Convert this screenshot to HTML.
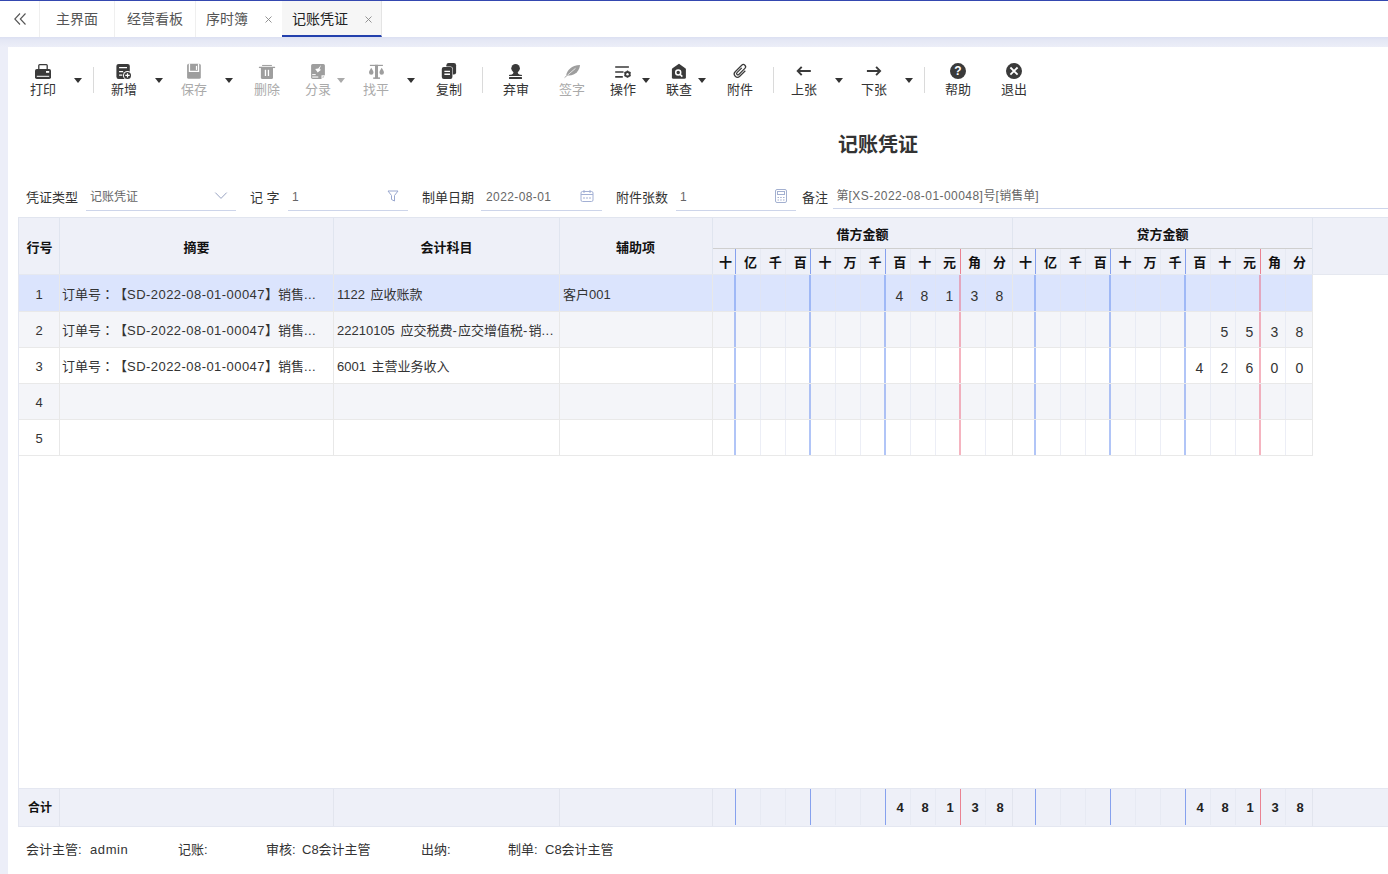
<!DOCTYPE html>
<html lang="zh-CN">
<head>
<meta charset="utf-8">
<title>记账凭证</title>
<style>
*{box-sizing:border-box;margin:0;padding:0}
html,body{width:1388px;height:874px;overflow:hidden}
body{background:#eceef8;text-spacing-trim:space-all;font-family:"Liberation Sans","Noto Sans CJK SC",sans-serif;font-size:14px;color:#333;position:relative}
.abs{position:absolute}
/* top tab bar */
#topline{left:0;top:0;width:1388px;height:1px;background:#3448b0}
#tabbar{left:0;top:0;width:1388px;height:37px;background:#fff}
#tabshadow{left:0;top:37px;width:1388px;height:10px;background:linear-gradient(#dce0f2,#e5e8f5 35%,#eceef8)}
.tab{position:absolute;top:1px;height:36px;line-height:37px;font-size:14px;color:#555;border-left:1px solid #efefef;white-space:nowrap}
.tab span{position:absolute;top:0}
.tab.act{background:#f6f6f6;color:#222;border-bottom:2px solid #2340ad;border-left:none;border-right:1px solid #e4e4e4}
.x{font-size:13px;color:#888}
/* panel */
#panel{left:8px;top:47px;width:1380px;height:827px;background:#fff}
/* toolbar */
.tb{position:absolute;top:62px;width:60px;height:38px;text-align:center;font-size:13px;color:#333}
.tb svg{position:absolute;left:50%;margin-left:-10px;top:0;width:20px;height:18px}
.tb b{position:absolute;left:0;right:0;top:19px;line-height:18px;font-weight:normal}
.tb.dis{color:#aaa}
.arr{position:absolute;width:0;height:0;border-left:4px solid transparent;border-right:4px solid transparent;border-top:5.5px solid #333;top:77.5px}
.arr.dis{border-top-color:#aaa}
.sep{position:absolute;top:67px;width:1px;height:26px;background:#dadada}
/* title */
#title{left:778px;top:130px;width:200px;text-align:center;font-size:20px;font-weight:bold;color:#333;line-height:30px}
/* form */
.lbl{position:absolute;top:188px;height:20px;line-height:20px;font-size:13px;color:#333;white-space:nowrap}
.inp{position:absolute;top:185px;height:26px;border-bottom:1px solid #cdd5ea;font-size:12px;color:#666;line-height:25px;padding-left:4px;white-space:nowrap}
/* table */
#thead{left:18px;top:217px;width:1370px;height:58px;background:#eef0f8;border-top:1px solid #e1e5ef;border-left:1px solid #e1e5ef;border-bottom:1px solid #e5e8f0}
.th{position:absolute;font-size:13px;font-weight:bold;color:#111;text-align:center;white-space:nowrap}
.vl{position:absolute;width:1px;background:rgba(225,228,241,.64)}
.hl{position:absolute;height:1px;background:#e9e9e9}
.row{position:absolute;left:19px;width:1293px;height:36px}
.cell{position:absolute;font-size:13px;color:#333;white-space:nowrap;line-height:36px;top:2px}
.l{letter-spacing:.45px}
.km{word-spacing:2px}
.hy{letter-spacing:1.2px}
.dg{position:absolute;width:25px;text-align:center;font-size:14px;color:#333;line-height:36px;top:3px}
#total{left:18px;top:788px;width:1370px;height:39px;background:#eef0f8;border-top:1px solid #e4e7f1;border-bottom:1px solid #e4e7f1;border-left:1px solid #e4e7f1}
.ft{position:absolute;top:840px;line-height:20px;font-size:13px;color:#333;white-space:nowrap}
.tc{font-family:"Liberation Sans","Noto Sans CJK TC",sans-serif}
</style>
</head>
<body>
<div id="tabbar" class="abs">
<svg class="abs" style="left:13px;top:12px" width="14" height="14" viewBox="0 0 14 14"><path d="M7 1.500 1.800 7l5.200 5.500M12.500 1.500 7.300 7l5.200 5.500" fill="none" stroke="#555" stroke-width="1.100"/></svg>
<div class="tab" style="left:39px;width:75px"><span style="left:16px">主界面</span></div>
<div class="tab" style="left:114px;width:81px"><span style="left:12px">经营看板</span></div>
<div class="tab" style="left:195px;width:87px"><span style="left:10px">序时簿</span><svg class="abs" style="left:69px;top:14.500px" width="7" height="7" viewBox="0 0 7 7"><path d="M.5.500l6 6M6.500.500l-6 6" stroke="#888" stroke-width=".9"/></svg></div>
<div class="tab act" style="left:282px;width:100px"><span style="left:10px">记账凭证</span><svg class="abs" style="left:83px;top:14.500px" width="7" height="7" viewBox="0 0 7 7"><path d="M.5.500l6 6M6.500.500l-6 6" stroke="#888" stroke-width=".9"/></svg></div>
</div>
<div id="topline" class="abs"></div>
<div id="tabshadow" class="abs"></div>
<div id="panel" class="abs"></div>
<div class="tb" style="left:13px"><svg viewBox="0 0 20 18"><path d="M5.800 7.500V3.500a.9.900 0 0 1 .9-.9h6.600a.9.900 0 0 1 .9.900V7.500" fill="none" stroke="#3a3a3a" stroke-width="1.300"/><rect x="2" y="7" width="16" height="10" rx="1.8" fill="#3a3a3a"/><rect x="13" y="9" width="3.2" height="1.8" fill="#fff"/><rect x="3.8" y="13.8" width="12.4" height="1" fill="#fff"/></svg><b>打印</b></div>
<i class="arr" style="left:73.5px"></i>
<div class="tb" style="left:94px"><svg viewBox="0 0 20 18"><rect x="2.400" y="1.900" width="13.400" height="15.100" rx="2.200" fill="#3a3a3a"/><path d="M5.100 5.500h7.900M5.100 9.600h4M5.100 13h3.200" stroke="#fff" stroke-width="1.250"/><circle cx="13.500" cy="13.400" r="4.500" fill="#fff"/><circle cx="13.500" cy="13.400" r="3.500" fill="#3a3a3a"/><path d="M11.300 13.400h4.400M13.500 11.200v4.400" stroke="#fff" stroke-width="1.200"/></svg><b>新增</b></div>
<i class="arr" style="left:154.5px"></i>
<div class="tb dis" style="left:164px"><svg viewBox="0 0 20 18"><rect x="3.100" y="1.800" width="13.700" height="15" rx="1.600" fill="#9e9e9e"/><path d="M5.450 1.500V9.400h9.100V1.500" fill="none" stroke="#fff" stroke-width="1.300"/><rect x="11.900" y="3.900" width="1.200" height="4" fill="#fff"/></svg><b>保存</b></div>
<i class="arr" style="left:224.5px"></i>
<div class="tb dis" style="left:237px"><svg viewBox="0 0 20 18"><path d="M5.100 3.450h9.800" stroke="#9e9e9e" stroke-width="1"/><path d="M1.900 5.400h16.200" stroke="#9e9e9e" stroke-width="1.300"/><path d="M3.900 6h12.100v9.400a1.500 1.500 0 0 1-1.500 1.500h-9.100a1.500 1.500 0 0 1-1.500-1.500z" fill="#9e9e9e"/><rect x="7.800" y="7.800" width="1.300" height="6.200" fill="#fff"/><rect x="10.800" y="7.800" width="1.300" height="6.200" fill="#fff"/></svg><b>删除</b></div>
<div class="tb dis" style="left:288px"><svg viewBox="0 0 20 18"><rect x="3.100" y="1.900" width="13.800" height="15" rx="1.600" fill="#9e9e9e"/><path d="M13.100 3 10.300 6.500 7.200 7.100 9.700 10.500 13.100 7.700 11.500 7.300z" fill="#fff"/><rect x="4.200" y="12.100" width="3.500" height="1" fill="#fff"/><rect x="4.200" y="14.200" width="6.100" height="1.700" fill="#fff" opacity=".65"/><rect x="13.500" y="13.300" width="3.600" height="3.800" fill="#fff"/><path d="M14.600 16.300v-1.700h1.700z" fill="#9e9e9e"/></svg><b>分录</b></div>
<i class="arr dis" style="left:336.5px"></i>
<div class="tb dis" style="left:346px"><svg viewBox="0 0 20 18"><rect x="3.900" y="2.800" width="13" height="1.200" fill="#9e9e9e"/><rect x="9" y="2.800" width="3" height="13.400" fill="#9e9e9e"/><rect x="7.200" y="15.400" width="6.800" height="1.500" fill="#9e9e9e"/><path d="M5.250 5.700c1.300 2 2.250 3.500 2.250 4.800a2.250 2.250 0 0 1-4.500 0c0-1.300.95-2.800 2.250-4.800zM15.700 5.700c1.300 2 2.250 3.500 2.250 4.800a2.250 2.250 0 0 1-4.500 0c0-1.300.95-2.800 2.250-4.800z" fill="#9e9e9e"/></svg><b>找平</b></div>
<i class="arr" style="left:406.5px"></i>
<div class="tb" style="left:419px"><svg viewBox="0 0 20 18"><rect x="7.400" y="1.100" width="9.700" height="11.300" rx="2.200" fill="#3a3a3a"/><rect x="2.300" y="4.500" width="11.600" height="13" rx="2.500" fill="#fff"/><rect x="2.800" y="5" width="10.600" height="12" rx="2" fill="#3a3a3a"/><path d="M5.400 9.400h5.600M5.400 12.300h5.600" stroke="#fff" stroke-width="1.400"/></svg><b>复制</b></div>
<div class="tb" style="left:486px"><svg viewBox="0 0 20 18"><circle cx="9.600" cy="6.300" r="4.300" fill="#3a3a3a"/><path d="M7.500 9.500h4.200c0 1.700.7 3 2.300 3.200h1.300a.7.700 0 0 1 .7.700v.6H3v-.6a.7.700 0 0 1 .7-.7h1.500c1.600-.2 2.300-1.500 2.300-3.200z" fill="#3a3a3a"/><rect x="3" y="15.100" width="13" height="1.900" rx=".6" fill="#3a3a3a"/></svg><b>弃审</b></div>
<div class="tb dis" style="left:542px"><svg viewBox="0 0 20 18"><path d="M4.200 13.200C4.800 8.500 9.500 3.200 18 3c-.3 5.200-4.300 10.400-11 10.400z" fill="#9e9e9e"/><path d="M2.700 15.600 13.500 6.300" stroke="#fff" stroke-width=".7"/><path d="M2.600 15.600 6 12.600" stroke="#9e9e9e" stroke-width=".9"/></svg><b>签字</b></div>
<div class="tb" style="left:593px"><svg viewBox="0 0 20 18"><path d="M2.200 5h13.700M2.200 10h8.300M2.200 14.900h7.600" stroke="#3a3a3a" stroke-width="1.700"/><circle cx="14.500" cy="12.200" r="2.300" fill="none" stroke="#3a3a3a" stroke-width="1.700"/><path d="M14.500 8.600v7.200M11.400 10.400l6.200 3.600M11.400 14l6.200-3.600" stroke="#3a3a3a" stroke-width="1.300"/><circle cx="14.500" cy="12.200" r="1.200" fill="#fff"/></svg><b>操作</b></div>
<i class="arr" style="left:641.5px"></i>
<div class="tb" style="left:649px"><svg viewBox="0 0 20 18"><path d="M10 1.700 16.300 6.300a1.500 1.500 0 0 1 .6 1.200v7.700a1.500 1.500 0 0 1-1.500 1.500H4.400a1.500 1.500 0 0 1-1.500-1.500V7.500a1.500 1.500 0 0 1 .6-1.200z" fill="#3a3a3a"/><circle cx="9.200" cy="10.500" r="2.500" fill="none" stroke="#fff" stroke-width="1.500"/><path d="M11 12.300 13.300 14.600" stroke="#fff" stroke-width="1.600"/></svg><b>联查</b></div>
<i class="arr" style="left:697.5px"></i>
<div class="tb" style="left:710px"><svg viewBox="0 0 20 18"><g transform="translate(10.400 9.100) rotate(45) scale(1.07)" fill="none" stroke="#3a3a3a" stroke-width="1.150"><path d="M3-3.500V3.850A3 3 0 0 1-3 3.850V-4.750A2.100 2.100 0 0 1 1.200-4.750V3.300A1.200 1.200 0 0 1-1.200 3.300V-3"/></g></svg><b>附件</b></div>
<div class="tb" style="left:774px"><svg viewBox="0 0 20 18"><path d="M3.800 9h13M7.700 4.900 3.700 9l4 4.100" fill="none" stroke="#3a3a3a" stroke-width="1.900"/></svg><b>上张</b></div>
<i class="arr" style="left:834.5px"></i>
<div class="tb" style="left:844px"><svg viewBox="0 0 20 18"><path d="M2.900 9h13M12.100 4.900l4 4.100-4 4.100" fill="none" stroke="#3a3a3a" stroke-width="1.900"/></svg><b>下张</b></div>
<i class="arr" style="left:904.5px"></i>
<div class="tb" style="left:928px"><svg viewBox="0 0 20 18"><circle cx="10" cy="9.100" r="8" fill="#3a3a3a"/><text x="10" y="13.400" text-anchor="middle" font-family="Liberation Sans,sans-serif" font-weight="bold" font-size="12" fill="#fff">?</text></svg><b>帮助</b></div>
<div class="tb" style="left:984px"><svg viewBox="0 0 20 18"><circle cx="10" cy="9.100" r="8" fill="#3a3a3a"/><path d="M6.400 5.500l7.200 7.200M13.600 5.500l-7.200 7.200" stroke="#fff" stroke-width="1.800"/></svg><b>退出</b></div>
<i class="sep" style="left:93px"></i>
<i class="sep" style="left:482px"></i>
<i class="sep" style="left:773px"></i>
<i class="sep" style="left:924px"></i>
<div id="title" class="abs">记账凭证</div>
<div class="lbl" style="left:26px">凭证类型</div>
<div class="inp" style="left:86px;width:150px">记账凭证</div>
<svg class="abs" style="left:214px;top:191px" width="14" height="9" viewBox="0 0 14 9"><path d="M1.3 1.6 7 7.4 12.700 1.600" fill="none" stroke="#98a3c2" stroke-width="1"/></svg>
<div class="lbl" style="left:250px">记 字</div>
<div class="inp" style="left:288px;width:120px">1</div>
<svg class="abs" style="left:387px;top:190px" width="12" height="12" viewBox="0 0 12 12"><path d="M1 1h10L7.5 5.5V11L4.5 9.5V5.5Z" fill="none" stroke="#9aa8cf" stroke-width="1"/></svg>
<div class="lbl" style="left:422px">制单日期</div>
<div class="inp" style="left:481px;width:121px;letter-spacing:.4px;padding-left:5px">2022-08-01</div>
<svg class="abs" style="left:580px;top:189px" width="14" height="14" viewBox="0 0 14 14"><g fill="none" stroke="#a3b0d4" stroke-width="1"><rect x="1" y="2.5" width="12" height="10" rx="1.5"/><path d="M1 5.5h12M4 1v3M10 1v3"/></g><path d="M3.5 8h1v2h-1zM6.5 8h1v2h-1zM9.5 8h1v2h-1z" fill="#a3b0d4"/></svg>
<div class="lbl" style="left:616px">附件张数</div>
<div class="inp" style="left:676px;width:120px">1</div>
<svg class="abs" style="left:775px;top:189px" width="12" height="14" viewBox="0 0 12 14"><g fill="none" stroke="#a3b0d0" stroke-width="1"><rect x="0.5" y="0.5" width="11" height="13" rx="1.5"/><rect x="2.5" y="2.5" width="7" height="3"/></g><path d="M2.5 8h1.5v1h-1.5zM5.2 8h1.5v1h-1.5zM8 8h1.5v1h-1.5zM2.5 10.5h1.5v1h-1.5zM5.2 10.5h1.5v1h-1.5zM8 10.5h1.5v1h-1.5z" fill="#a3b0d0"/></svg>
<div class="lbl" style="left:802px">备注</div>
<div class="inp" style="left:833px;width:555px;top:182px;height:27px;line-height:28px;padding-left:3.5px">第<span class="l">[XS-2022-08-01-00048]</span>号<span class="l">[</span>销售单<span class="l">]</span></div>
<div id="thead" class="abs"></div>
<div class="th" style="left:9.5px;top:238px;width:60px;line-height:20px">行号</div>
<div class="th" style="left:96.5px;top:238px;width:200px;line-height:20px">摘要</div>
<div class="th" style="left:346.5px;top:238px;width:200px;line-height:20px">会计科目</div>
<div class="th" style="left:535.5px;top:238px;width:200px;line-height:20px">辅助项</div>
<div class="th" style="left:762.5px;top:225px;width:200px;line-height:20px">借方金额</div>
<div class="th" style="left:1062.5px;top:225px;width:200px;line-height:20px">贷方金额</div>
<div class="th" style="left:713.5px;top:253px;width:24px;line-height:20px">十</div>
<div class="th" style="left:738.4px;top:253px;width:24px;line-height:20px">亿</div>
<div class="th" style="left:763.3px;top:253px;width:24px;line-height:20px">千</div>
<div class="th" style="left:788.2px;top:253px;width:24px;line-height:20px">百</div>
<div class="th" style="left:813.1px;top:253px;width:24px;line-height:20px">十</div>
<div class="th" style="left:838.0px;top:253px;width:24px;line-height:20px">万</div>
<div class="th" style="left:862.9px;top:253px;width:24px;line-height:20px">千</div>
<div class="th" style="left:887.8px;top:253px;width:24px;line-height:20px">百</div>
<div class="th" style="left:912.7px;top:253px;width:24px;line-height:20px">十</div>
<div class="th" style="left:937.6px;top:253px;width:24px;line-height:20px">元</div>
<div class="th" style="left:962.5px;top:253px;width:24px;line-height:20px">角</div>
<div class="th" style="left:987.4px;top:253px;width:24px;line-height:20px">分</div>
<div class="th" style="left:1013.5px;top:253px;width:24px;line-height:20px">十</div>
<div class="th" style="left:1038.4px;top:253px;width:24px;line-height:20px">亿</div>
<div class="th" style="left:1063.3px;top:253px;width:24px;line-height:20px">千</div>
<div class="th" style="left:1088.2px;top:253px;width:24px;line-height:20px">百</div>
<div class="th" style="left:1113.1px;top:253px;width:24px;line-height:20px">十</div>
<div class="th" style="left:1138.0px;top:253px;width:24px;line-height:20px">万</div>
<div class="th" style="left:1162.9px;top:253px;width:24px;line-height:20px">千</div>
<div class="th" style="left:1187.8px;top:253px;width:24px;line-height:20px">百</div>
<div class="th" style="left:1212.7px;top:253px;width:24px;line-height:20px">十</div>
<div class="th" style="left:1237.6px;top:253px;width:24px;line-height:20px">元</div>
<div class="th" style="left:1262.5px;top:253px;width:24px;line-height:20px">角</div>
<div class="th" style="left:1287.4px;top:253px;width:24px;line-height:20px">分</div>
<i class="vl" style="left:59px;top:218px;height:56px;background:#e0e5ef"></i>
<i class="vl" style="left:333px;top:218px;height:56px;background:#e0e5ef"></i>
<i class="vl" style="left:559px;top:218px;height:56px;background:#e0e5ef"></i>
<i class="vl" style="left:712px;top:218px;height:56px;background:#e0e5ef"></i>
<i class="vl" style="left:1012px;top:218px;height:56px;background:#e0e5ef"></i>
<i class="vl" style="left:1312px;top:218px;height:56px;background:#e0e5ef"></i>
<i class="hl" style="left:713px;top:248px;width:599px;background:#cfcfcf"></i>
<i class="vl" style="left:735px;top:249px;height:25px;background:#86a1ee"></i>
<i class="vl" style="left:760px;top:249px;height:25px;background:#e7eaf3"></i>
<i class="vl" style="left:785px;top:249px;height:25px;background:#e7eaf3"></i>
<i class="vl" style="left:810px;top:249px;height:25px;background:#86a1ee"></i>
<i class="vl" style="left:835px;top:249px;height:25px;background:#e7eaf3"></i>
<i class="vl" style="left:860px;top:249px;height:25px;background:#e7eaf3"></i>
<i class="vl" style="left:885px;top:249px;height:25px;background:#86a1ee"></i>
<i class="vl" style="left:910px;top:249px;height:25px;background:#e7eaf3"></i>
<i class="vl" style="left:935px;top:249px;height:25px;background:#e7eaf3"></i>
<i class="vl" style="left:960px;top:249px;height:25px;background:#ea8292"></i>
<i class="vl" style="left:985px;top:249px;height:25px;background:#e7eaf3"></i>
<i class="vl" style="left:1035px;top:249px;height:25px;background:#86a1ee"></i>
<i class="vl" style="left:1060px;top:249px;height:25px;background:#e7eaf3"></i>
<i class="vl" style="left:1085px;top:249px;height:25px;background:#e7eaf3"></i>
<i class="vl" style="left:1110px;top:249px;height:25px;background:#86a1ee"></i>
<i class="vl" style="left:1135px;top:249px;height:25px;background:#e7eaf3"></i>
<i class="vl" style="left:1160px;top:249px;height:25px;background:#e7eaf3"></i>
<i class="vl" style="left:1185px;top:249px;height:25px;background:#86a1ee"></i>
<i class="vl" style="left:1210px;top:249px;height:25px;background:#e7eaf3"></i>
<i class="vl" style="left:1235px;top:249px;height:25px;background:#e7eaf3"></i>
<i class="vl" style="left:1260px;top:249px;height:25px;background:#ea8292"></i>
<i class="vl" style="left:1285px;top:249px;height:25px;background:#e7eaf3"></i>
<div class="row" style="top:275px;background:#dbe4fd">
<div class="cell" style="left:0;width:40px;text-align:center">1</div>
<div class="cell" style="left:43px">订单号<span class="tc" lang="zh-TW">：</span>【<span class="l">SD-2022-08-01-00047</span>】销售<span class="l">...</span></div>
<div class="cell km" style="left:318px">1122 应收账款</div>
<div class="cell" style="left:544px">客户001</div>
<div class="dg" style="left:868.0px">4</div>
<div class="dg" style="left:893.0px">8</div>
<div class="dg" style="left:918.0px">1</div>
<div class="dg" style="left:943.0px">3</div>
<div class="dg" style="left:968.0px">8</div>
</div>
<div class="row" style="top:311px;background:#f4f5f9">
<div class="cell" style="left:0;width:40px;text-align:center">2</div>
<div class="cell" style="left:43px">订单号<span class="tc" lang="zh-TW">：</span>【<span class="l">SD-2022-08-01-00047</span>】销售<span class="l">...</span></div>
<div class="cell km" style="left:318px">22210105 应交税费<span class="hy">-</span>应交增值税<span class="hy">-</span>销<span class="l">...</span></div>
<div class="dg" style="left:1193.0px">5</div>
<div class="dg" style="left:1218.0px">5</div>
<div class="dg" style="left:1243.0px">3</div>
<div class="dg" style="left:1268.0px">8</div>
</div>
<div class="row" style="top:347px;background:#ffffff">
<div class="cell" style="left:0;width:40px;text-align:center">3</div>
<div class="cell" style="left:43px">订单号<span class="tc" lang="zh-TW">：</span>【<span class="l">SD-2022-08-01-00047</span>】销售<span class="l">...</span></div>
<div class="cell km" style="left:318px">6001 主营业务收入</div>
<div class="dg" style="left:1168.0px">4</div>
<div class="dg" style="left:1193.0px">2</div>
<div class="dg" style="left:1218.0px">6</div>
<div class="dg" style="left:1243.0px">0</div>
<div class="dg" style="left:1268.0px">0</div>
</div>
<div class="row" style="top:383px;background:#f4f5f9">
<div class="cell" style="left:0;width:40px;text-align:center">4</div>
</div>
<div class="row" style="top:419px;background:#ffffff">
<div class="cell" style="left:0;width:40px;text-align:center">5</div>
</div>
<i class="vl" style="left:59px;top:275px;height:181px;background:#e8e8e8"></i>
<i class="vl" style="left:333px;top:275px;height:181px;background:#e8e8e8"></i>
<i class="vl" style="left:559px;top:275px;height:181px;background:#e8e8e8"></i>
<i class="vl" style="left:712px;top:275px;height:181px;background:#e8e8e8"></i>
<i class="vl" style="left:1012px;top:275px;height:181px;background:#e8e8e8"></i>
<i class="vl" style="left:1312px;top:275px;height:181px;background:#e8e8e8"></i>
<i class="vl" style="left:734px;top:275px;height:180px;width:2px;background:rgba(100,140,240,.5)"></i>
<i class="vl" style="left:760px;top:275px;height:180px"></i>
<i class="vl" style="left:785px;top:275px;height:180px"></i>
<i class="vl" style="left:809px;top:275px;height:180px;width:2px;background:rgba(100,140,240,.5)"></i>
<i class="vl" style="left:835px;top:275px;height:180px"></i>
<i class="vl" style="left:860px;top:275px;height:180px"></i>
<i class="vl" style="left:884px;top:275px;height:180px;width:2px;background:rgba(100,140,240,.5)"></i>
<i class="vl" style="left:910px;top:275px;height:180px"></i>
<i class="vl" style="left:935px;top:275px;height:180px"></i>
<i class="vl" style="left:959px;top:275px;height:180px;width:2px;background:rgba(235,105,130,.5)"></i>
<i class="vl" style="left:985px;top:275px;height:180px"></i>
<i class="vl" style="left:1034px;top:275px;height:180px;width:2px;background:rgba(100,140,240,.5)"></i>
<i class="vl" style="left:1060px;top:275px;height:180px"></i>
<i class="vl" style="left:1085px;top:275px;height:180px"></i>
<i class="vl" style="left:1109px;top:275px;height:180px;width:2px;background:rgba(100,140,240,.5)"></i>
<i class="vl" style="left:1135px;top:275px;height:180px"></i>
<i class="vl" style="left:1160px;top:275px;height:180px"></i>
<i class="vl" style="left:1184px;top:275px;height:180px;width:2px;background:rgba(100,140,240,.5)"></i>
<i class="vl" style="left:1210px;top:275px;height:180px"></i>
<i class="vl" style="left:1235px;top:275px;height:180px"></i>
<i class="vl" style="left:1259px;top:275px;height:180px;width:2px;background:rgba(235,105,130,.5)"></i>
<i class="vl" style="left:1285px;top:275px;height:180px"></i>
<i class="hl" style="left:19px;top:311px;width:1294px"></i>
<i class="hl" style="left:19px;top:347px;width:1294px"></i>
<i class="hl" style="left:19px;top:383px;width:1294px"></i>
<i class="hl" style="left:19px;top:419px;width:1294px"></i>
<i class="hl" style="left:19px;top:455px;width:1294px"></i>
<i class="vl" style="left:18px;top:275px;height:513px;background:#e4e7f1"></i>
<div id="total" class="abs"></div>
<div class="th" style="left:28px;top:798px;line-height:20px;font-size:12px">合计</div>
<i class="vl" style="left:59px;top:789px;height:37px;background:#e2e5ee"></i>
<i class="vl" style="left:333px;top:789px;height:37px;background:#e2e5ee"></i>
<i class="vl" style="left:559px;top:789px;height:37px;background:#e2e5ee"></i>
<i class="vl" style="left:712px;top:789px;height:37px;background:#e2e5ee"></i>
<i class="vl" style="left:1012px;top:789px;height:37px;background:#e2e5ee"></i>
<i class="vl" style="left:1312px;top:789px;height:37px;background:#e2e5ee"></i>
<i class="vl" style="left:735px;top:789px;height:36px;background:#86a1ee"></i>
<i class="vl" style="left:760px;top:789px;height:36px;background:#e7eaf3"></i>
<i class="vl" style="left:785px;top:789px;height:36px;background:#e7eaf3"></i>
<i class="vl" style="left:810px;top:789px;height:36px;background:#86a1ee"></i>
<i class="vl" style="left:835px;top:789px;height:36px;background:#e7eaf3"></i>
<i class="vl" style="left:860px;top:789px;height:36px;background:#e7eaf3"></i>
<i class="vl" style="left:885px;top:789px;height:36px;background:#86a1ee"></i>
<i class="vl" style="left:910px;top:789px;height:36px;background:#e7eaf3"></i>
<i class="vl" style="left:935px;top:789px;height:36px;background:#e7eaf3"></i>
<i class="vl" style="left:960px;top:789px;height:36px;background:#ea8292"></i>
<i class="vl" style="left:985px;top:789px;height:36px;background:#e7eaf3"></i>
<div class="dg" style="left:887.5px;top:790px;font-size:13px;font-weight:bold;color:#222">4</div>
<div class="dg" style="left:912.5px;top:790px;font-size:13px;font-weight:bold;color:#222">8</div>
<div class="dg" style="left:937.5px;top:790px;font-size:13px;font-weight:bold;color:#222">1</div>
<div class="dg" style="left:962.5px;top:790px;font-size:13px;font-weight:bold;color:#222">3</div>
<div class="dg" style="left:987.5px;top:790px;font-size:13px;font-weight:bold;color:#222">8</div>
<i class="vl" style="left:1035px;top:789px;height:36px;background:#86a1ee"></i>
<i class="vl" style="left:1060px;top:789px;height:36px;background:#e7eaf3"></i>
<i class="vl" style="left:1085px;top:789px;height:36px;background:#e7eaf3"></i>
<i class="vl" style="left:1110px;top:789px;height:36px;background:#86a1ee"></i>
<i class="vl" style="left:1135px;top:789px;height:36px;background:#e7eaf3"></i>
<i class="vl" style="left:1160px;top:789px;height:36px;background:#e7eaf3"></i>
<i class="vl" style="left:1185px;top:789px;height:36px;background:#86a1ee"></i>
<i class="vl" style="left:1210px;top:789px;height:36px;background:#e7eaf3"></i>
<i class="vl" style="left:1235px;top:789px;height:36px;background:#e7eaf3"></i>
<i class="vl" style="left:1260px;top:789px;height:36px;background:#ea8292"></i>
<i class="vl" style="left:1285px;top:789px;height:36px;background:#e7eaf3"></i>
<div class="dg" style="left:1187.5px;top:790px;font-size:13px;font-weight:bold;color:#222">4</div>
<div class="dg" style="left:1212.5px;top:790px;font-size:13px;font-weight:bold;color:#222">8</div>
<div class="dg" style="left:1237.5px;top:790px;font-size:13px;font-weight:bold;color:#222">1</div>
<div class="dg" style="left:1262.5px;top:790px;font-size:13px;font-weight:bold;color:#222">3</div>
<div class="dg" style="left:1287.5px;top:790px;font-size:13px;font-weight:bold;color:#222">8</div>
<div class="ft" style="left:26px">会计主管:</div>
<div class="ft" style="left:90px"><span style="letter-spacing:.6px">admin</span></div>
<div class="ft" style="left:178px">记账:</div>
<div class="ft" style="left:266px">审核:</div>
<div class="ft" style="left:302px">C8会计主管</div>
<div class="ft" style="left:421px">出纳:</div>
<div class="ft" style="left:508px">制单:</div>
<div class="ft" style="left:545px">C8会计主管</div>
</body>
</html>
